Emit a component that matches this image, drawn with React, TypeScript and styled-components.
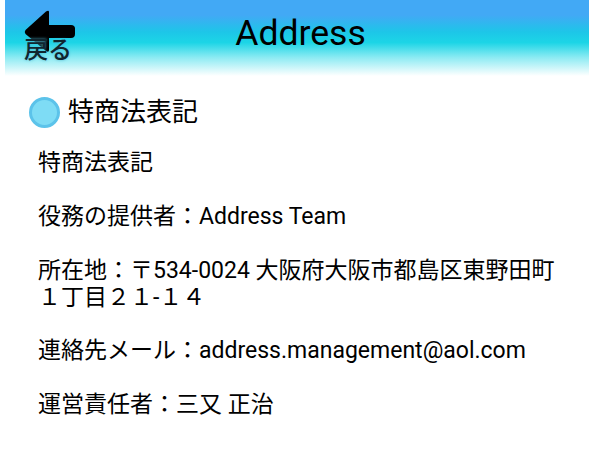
import styled, { createGlobalStyle } from "styled-components";

const GlobalStyle = createGlobalStyle`
  html, body {
    margin: 0;
    padding: 0;
    background: #ffffff;
  }
  body {
    font-family: Roboto, "Noto Sans CJK JP", sans-serif;
    color: #000000;
  }
`;

const BackIcon = () => (
  <svg width="52" height="44" viewBox="0 0 52 44">
    <path
      d="M25 2 Q25 0 22 1.5 L1.5 20 Q0 22 1.5 24 L22 41 Q25 43 25 40 L25 28 L47 28 Q51 28 51 24 L51 18.5 Q51 15 47 15 L25 15 Z"
      fill="#000000"
    />
  </svg>
);

const App = () => {
  return (
    <>
      <GlobalStyle />
      <Page>
        <Header>
          <BackButton>
            <BackIcon />
            <BackLabel>戻る</BackLabel>
          </BackButton>
          <Title>Address</Title>
        </Header>
        <SectionTitle>
          <Dot />
          特商法表記
        </SectionTitle>
        <Content>
          <Paragraph>特商法表記</Paragraph>
          <Paragraph>役務の提供者：Address Team</Paragraph>
          <Paragraph>
            所在地：〒534-0024 大阪府大阪市都島区東野田町
            <br />１丁目２１-１４
          </Paragraph>
          <Paragraph>連絡先メール：address.management@aol.com</Paragraph>
          <Paragraph>運営責任者：三又 正治</Paragraph>
        </Content>
      </Page>
    </>
  );
};

export default App;

const Page = styled.div`
  width: 589px;
  height: 452px;
  overflow: hidden;
`;

const Header = styled.header`
  position: relative;
  display: flex;
  justify-content: center;
  margin-left: 5px;
  height: 76px;
  background: linear-gradient(
    to bottom,
    #42a9f5 0%,
    #42a9f5 20%,
    #1dc6e8 42%,
    #1cd5e6 56%,
    #8eebf3 76%,
    #ffffff 100%
  );
`;

const BackButton = styled.div`
  position: absolute;
  left: 19px;
  top: 10px;
  width: 52px;
  height: 54px;
`;

const BackLabel = styled.span`
  position: absolute;
  left: 0;
  top: 27px;
  font-size: 24px;
  font-weight: 500;
  line-height: 26px;
  white-space: nowrap;
  color: #10262f;
  text-shadow: 0 0 3px #4fb8d2;
`;

const Title = styled.h1`
  margin: 13px 0 0 7px;
  font-size: 35.6px;
  font-weight: 400;
  line-height: 40px;
`;

const SectionTitle = styled.h2`
  display: flex;
  align-items: center;
  gap: 8px;
  margin: 19px 0 0 29px;
  font-size: 26px;
  font-weight: 400;
  line-height: 34px;
`;

const Dot = styled.span`
  box-sizing: border-box;
  width: 31px;
  height: 31px;
  border-radius: 50%;
  background: #7edcf5;
  border: 3px solid #5cc3ea;
`;

const Content = styled.div`
  display: flex;
  flex-direction: column;
  gap: 26.8px;
  margin: 20px 0 0 38px;
  font-size: 23px;
  line-height: 27px;
`;

const Paragraph = styled.div`
  white-space: nowrap;
`;
